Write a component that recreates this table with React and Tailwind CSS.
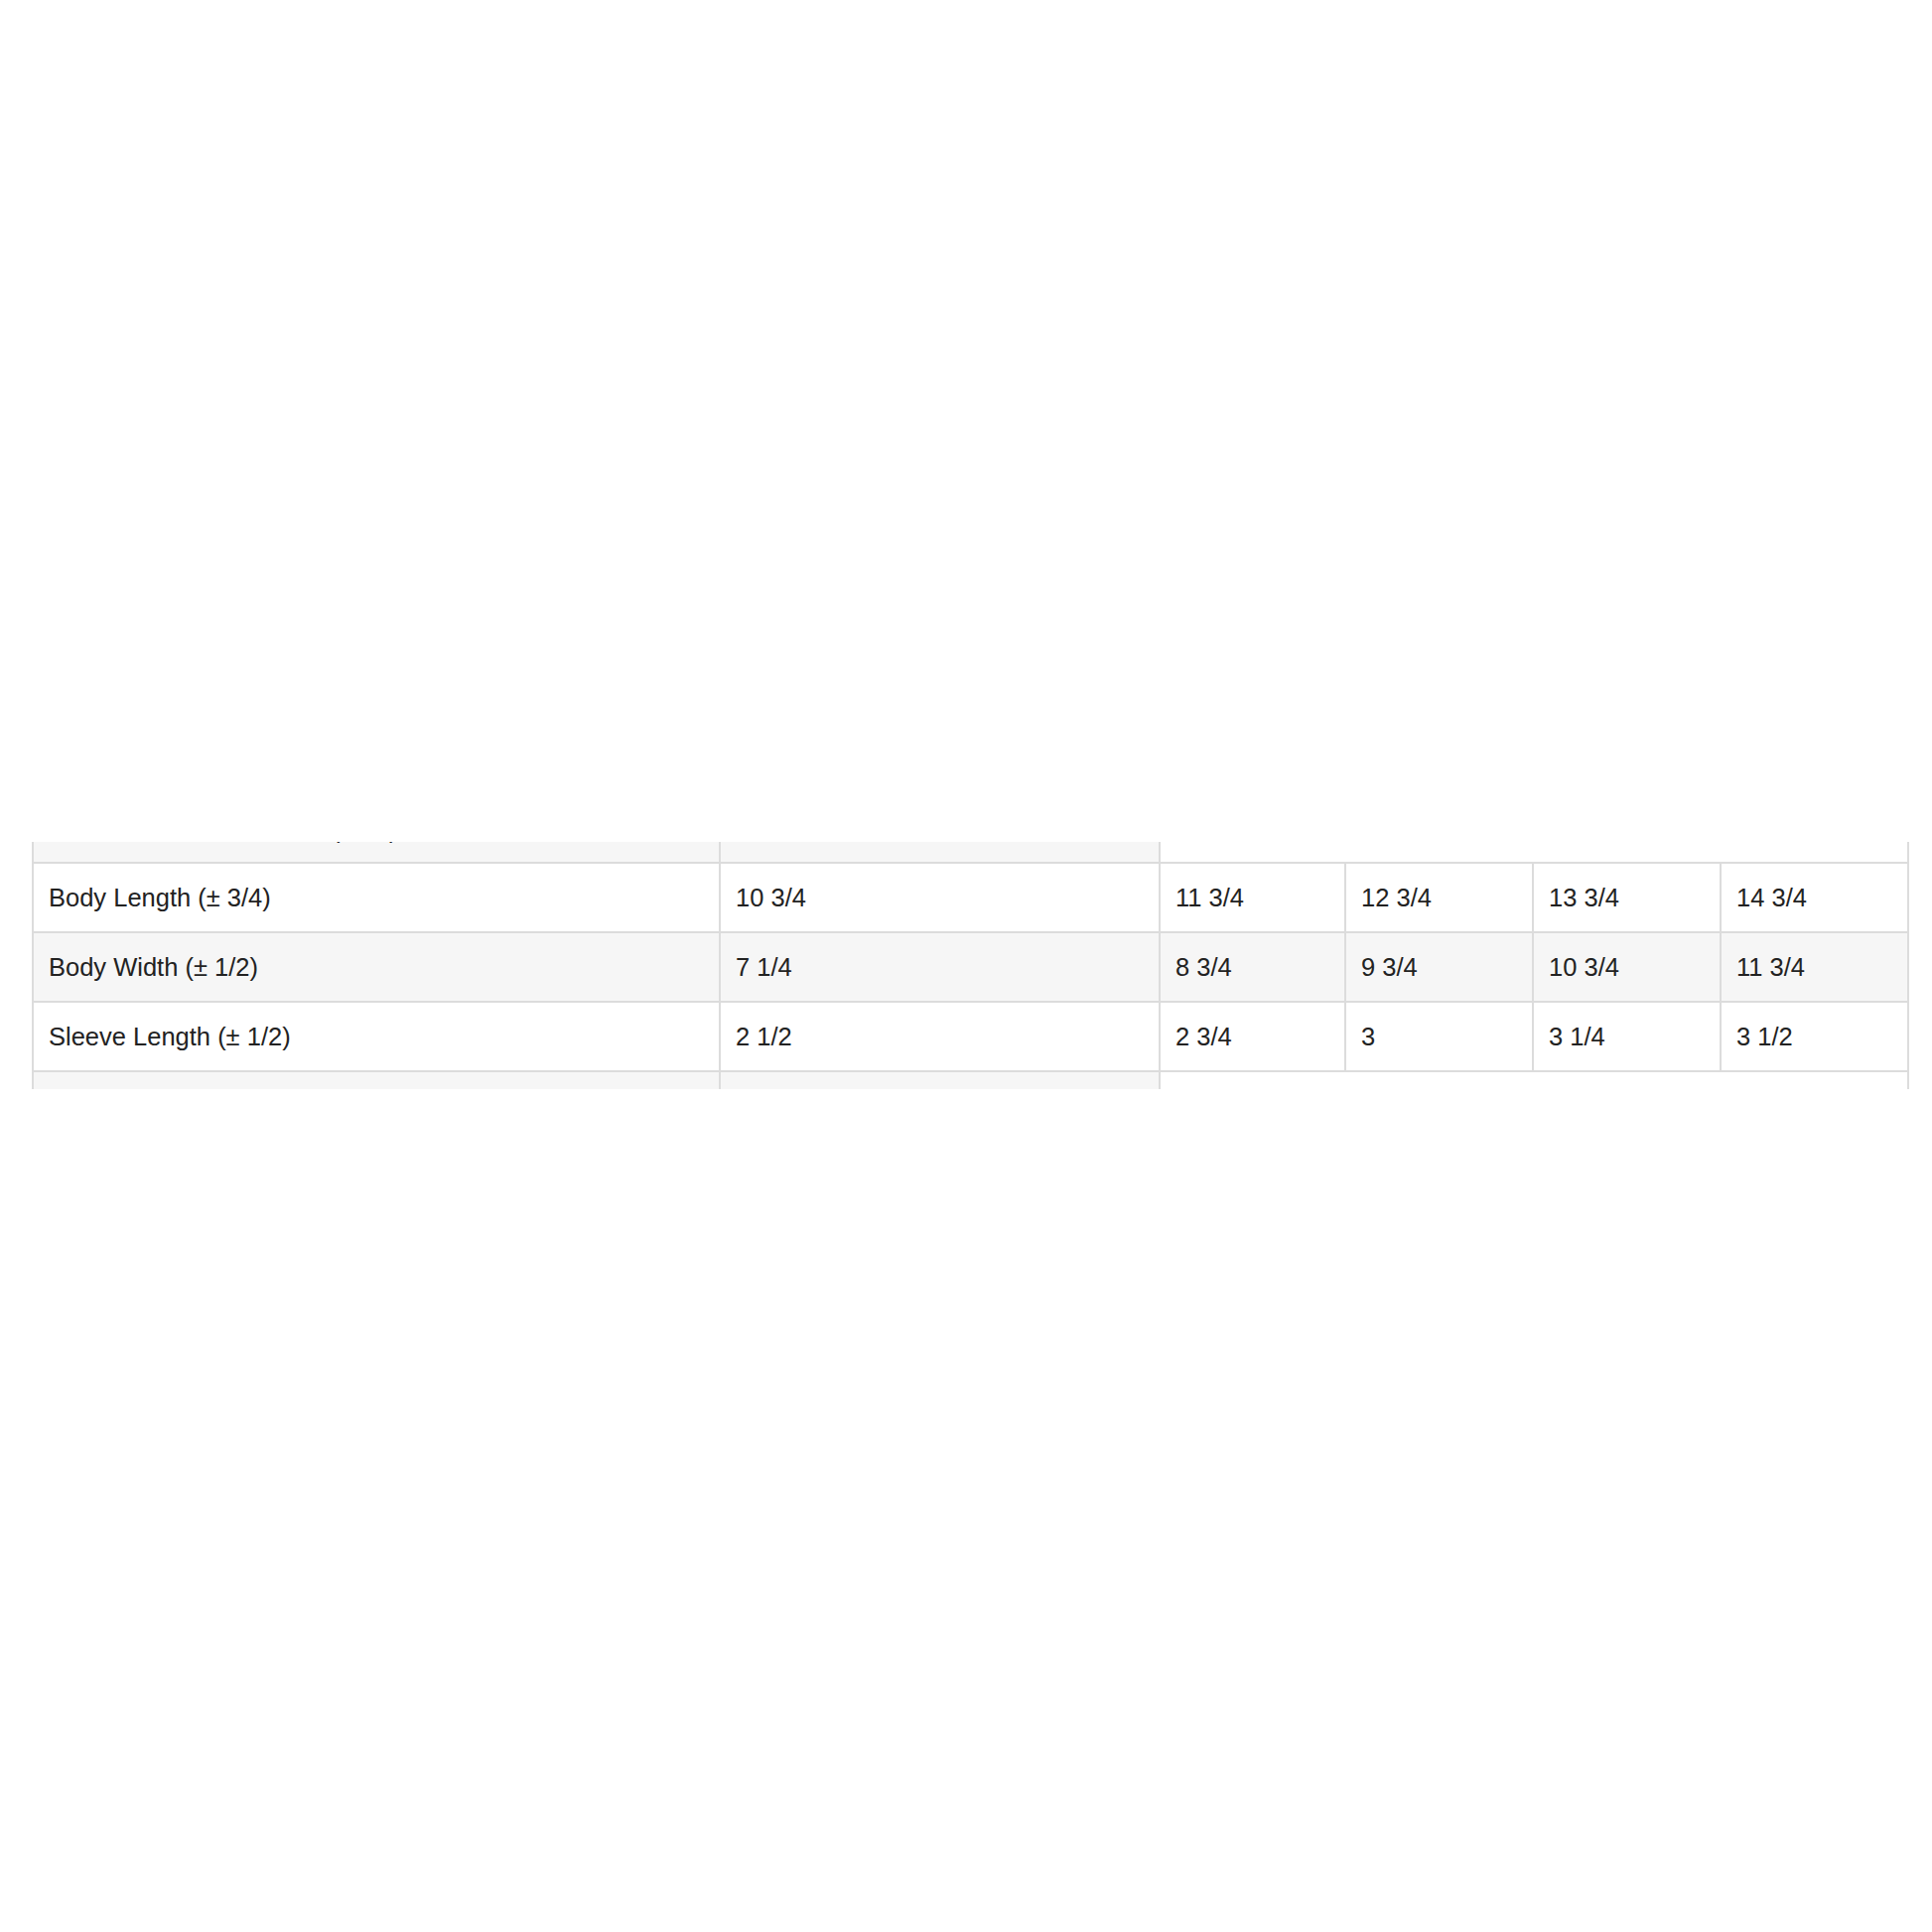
import React from 'react'

const rows = [
  { label: 'Body Length (± 3/4)', values: ['10 3/4', '11 3/4', '12 3/4', '13 3/4', '14 3/4'] },
  { label: 'Body Width (± 1/2)', values: ['7 1/4', '8 3/4', '9 3/4', '10 3/4', '11 3/4'] },
  { label: 'Sleeve Length (± 1/2)', values: ['2 1/2', '2 3/4', '3', '3 1/4', '3 1/2'] },
]

const cell = 'h-[70px] border-b-2 border-r-2 border-[#dcdcdc] pl-[15px] align-middle text-left font-normal'

export default function App() {
  return (
    <div className="w-[1946px] h-[1946px] bg-white pt-[848px] font-['Liberation_Sans',Arial,sans-serif] text-[25.5px] text-[#222222]">
      {/* only a slice of the size table is visible */}
      <div className="ml-[32px] w-[1891px] h-[249px] overflow-hidden">
        <table className="-mt-[48px] w-[1891px] table-fixed border-separate border-spacing-0">
          <colgroup>
            <col className="w-[694px]" />
            <col className="w-[443px]" />
            <col className="w-[187px]" />
            <col className="w-[189px]" />
            <col className="w-[189px]" />
            <col className="w-[189px]" />
          </colgroup>
          <tbody>
            <tr>
              <td className={`${cell} border-l-2 bg-[#f6f6f6] pt-[3px]`}>Measurements in Inches (Size)</td>
              <td className={`${cell} bg-[#f6f6f6]`}></td>
              <td colSpan={4} className={`${cell} bg-white`}></td>
            </tr>
            {rows.map((r, i) => (
              <tr key={r.label} className={i % 2 === 1 ? 'bg-[#f6f6f6]' : 'bg-white'}>
                <td className={`${cell} border-l-2`}>{r.label}</td>
                {r.values.map((v, j) => (
                  <td key={j} className={cell}>{v}</td>
                ))}
              </tr>
            ))}
            <tr>
              <td className={`${cell} border-l-2 bg-[#f6f6f6]`}></td>
              <td className={`${cell} bg-[#f6f6f6]`}></td>
              <td colSpan={4} className={`${cell} bg-white`}></td>
            </tr>
          </tbody>
        </table>
      </div>
    </div>
  )
}
